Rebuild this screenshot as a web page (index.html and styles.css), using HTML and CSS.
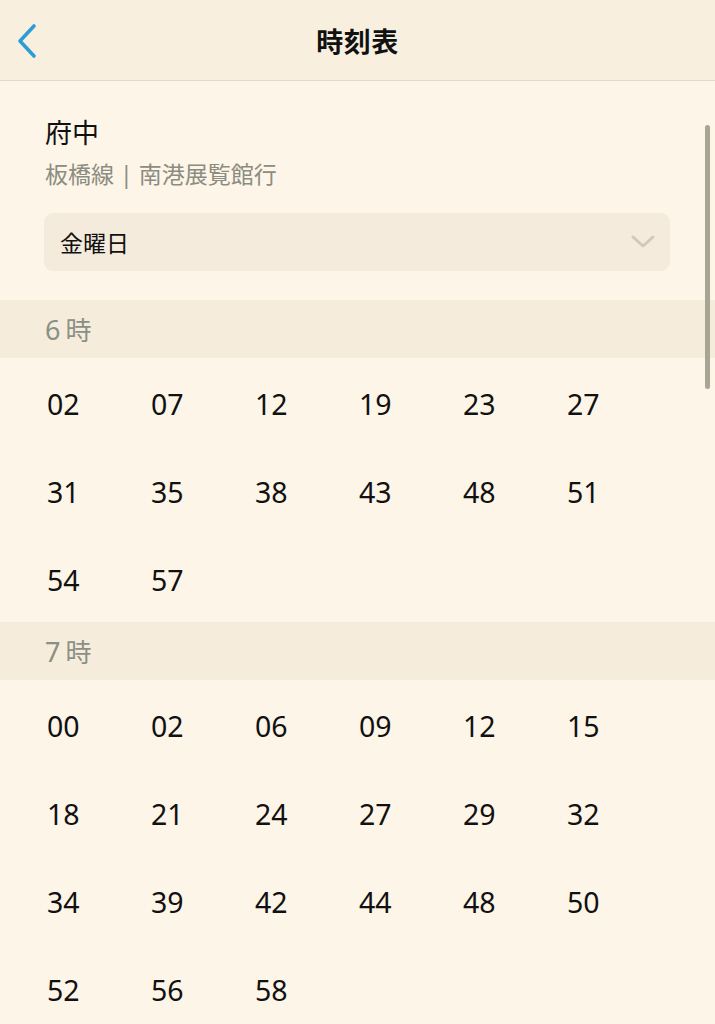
FILE: index.html
```html
<!DOCTYPE html>
<html lang="ja">
<head>
<meta charset="utf-8">
<link rel="stylesheet" href="styles.css">
</head>
<body>
<div class="app">
  <header class="nav">
    <button class="back" aria-label="戻る">
      <svg width="24" height="36" viewBox="0 0 24 36"><path d="M19 3 L5 18 L19 33" fill="none" stroke="#2b9ed6" stroke-width="3.6" stroke-linecap="round" stroke-linejoin="round"/></svg>
    </button>
    <h1 class="title">時刻表</h1>
  </header>
  <main class="content">
    <section class="station">
      <div class="name">府中</div>
      <div class="line">板橋線 | 南港展覧館行</div>
      <div class="select">
        <span>金曜日</span>
        <svg width="26" height="16" viewBox="0 0 26 16"><path d="M3 3 L13 12 L23 3" fill="none" stroke="#d2c8b7" stroke-width="3" stroke-linecap="round" stroke-linejoin="round"/></svg>
      </div>
    </section>
    <section class="hour">
      <div class="hour-head">6<span class="ji">時</span></div>
      <div class="grid">
        <span>02</span><span>07</span><span>12</span><span>19</span><span>23</span><span>27</span>
        <span>31</span><span>35</span><span>38</span><span>43</span><span>48</span><span>51</span>
        <span>54</span><span>57</span>
      </div>
    </section>
    <section class="hour">
      <div class="hour-head">7<span class="ji">時</span></div>
      <div class="grid">
        <span>00</span><span>02</span><span>06</span><span>09</span><span>12</span><span>15</span>
        <span>18</span><span>21</span><span>24</span><span>27</span><span>29</span><span>32</span>
        <span>34</span><span>39</span><span>42</span><span>44</span><span>48</span><span>50</span>
        <span>52</span><span>56</span><span>58</span>
      </div>
    </section>
  </main>
  <div class="scrollbar"></div>
</div>
</body>
</html>
```
FILE: styles.css
```css
* { box-sizing: border-box; }
html, body { margin: 0; padding: 0; }
body {
  background: #fdf5e7;
  font-family: "Noto Sans", "Noto Sans CJK JP", sans-serif;
  color: #111;
}
.app {
  position: relative;
  width: 715px;
  height: 1024px;
  overflow: hidden;
}
.nav {
  height: 81px;
  background: #f8efdf;
  border-bottom: 1px solid #e2d9ca;
  display: flex;
  align-items: center;
  justify-content: center;
  position: relative;
}
.back {
  position: absolute;
  left: 12px;
  top: 22px;
  background: none;
  border: 0;
  padding: 0;
  width: 30px;
  height: 38px;
  display: flex;
  align-items: center;
  justify-content: center;
}
.title {
  margin: 0;
  font-family: "Noto Sans CJK JP", sans-serif;
  font-size: 27px;
  font-weight: 700;
  line-height: 1;
  letter-spacing: 0.5px;
}
.station {
  padding: 34px 45px 29px 44px;
}
.name {
  font-size: 27px;
  line-height: 36px;
  padding-left: 1px;
}
.line {
  margin-top: 8px;
  font-size: 23px;
  line-height: 30px;
  color: #8c8c82;
  padding-left: 1px;
}
.select {
  margin-top: 24px;
  height: 58px;
  border-radius: 9px;
  background: #f4ebdc;
  display: flex;
  align-items: center;
  justify-content: space-between;
  padding: 0 14px 0 16px;
  font-size: 23px;
}
.hour-head {
  height: 58px;
  background: #f5ecdc;
  padding-left: 45px;
  display: flex;
  align-items: center;
  font-size: 27px;
  color: #8b9086;
}
.hour-head .ji { margin-left: 5px; font-size: 26px; }
.grid {
  display: grid;
  grid-template-columns: repeat(6, 104px);
  grid-auto-rows: 88px;
  padding-left: 47px;
}
.grid span {
  display: flex;
  align-items: center;
  padding-top: 3px;
  font-size: 28.5px;
}
.scrollbar {
  position: absolute;
  right: 5px;
  top: 125px;
  width: 5px;
  height: 264px;
  border-radius: 3px;
  background: #a9a595;
}
```
